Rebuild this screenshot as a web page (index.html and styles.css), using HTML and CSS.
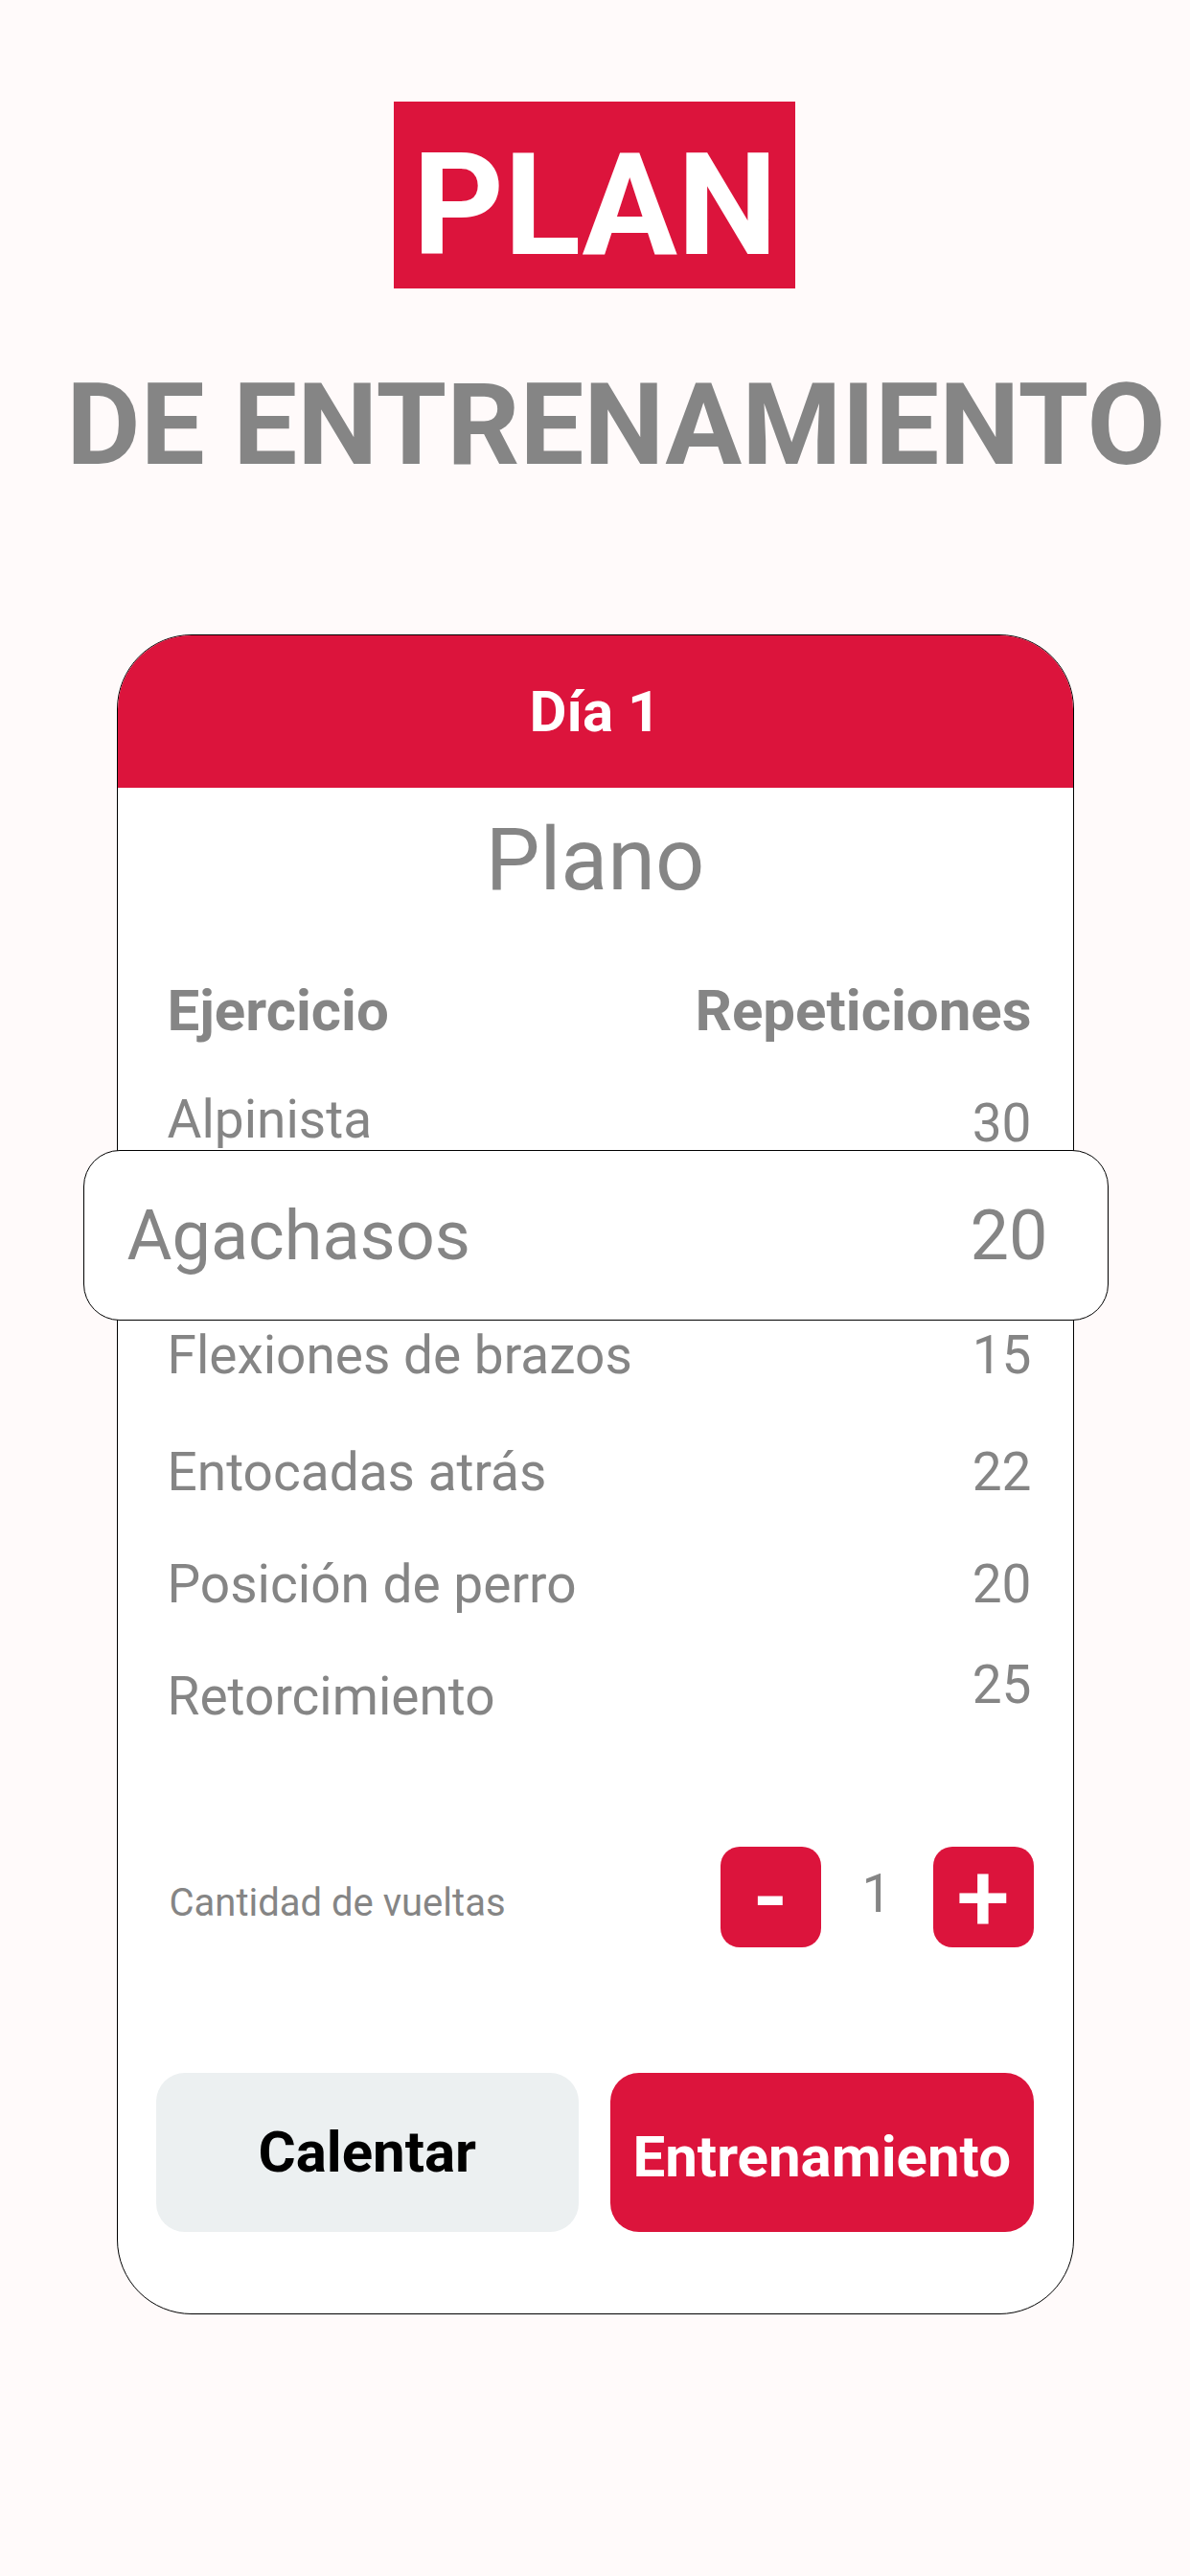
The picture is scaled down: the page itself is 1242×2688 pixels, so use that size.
FILE: index.html
```html
<!DOCTYPE html>
<html lang="es">
<head>
<meta charset="utf-8">
<title>Plan de entrenamiento</title>
<link rel="stylesheet" href="styles.css">
</head>
<body>
<main class="screen">
  <header class="title">
    <h1 class="title-plan">PLAN</h1>
    <h2 class="title-sub">DE ENTRENAMIENTO</h2>
  </header>

  <section class="card">
    <div class="card-head">Día 1</div>
    <h3 class="card-title">Plano</h3>

    <div class="table">
      <div class="row head"><span>Ejercicio</span><span>Repeticiones</span></div>
      <div class="row first"><span>Alpinista</span><span class="num down">30</span></div>
      <div class="row active"><span>Agachasos</span><span class="num">20</span></div>
      <div class="row after-active"><span>Flexiones de brazos</span><span class="num">15</span></div>
      <div class="row wide"><span>Entocadas atrás</span><span class="num">22</span></div>
      <div class="row"><span>Posición de perro</span><span class="num">20</span></div>
      <div class="row"><span>Retorcimiento</span><span class="num up">25</span></div>
    </div>

    <div class="stepper-row">
      <span class="stepper-label">Cantidad de vueltas</span>
      <div class="stepper">
        <button class="step-btn minus" type="button">-</button>
        <span class="step-val">1</span>
        <button class="step-btn plus" type="button">+</button>
      </div>
    </div>

    <div class="actions">
      <button class="btn btn-light" type="button">Calentar</button>
      <button class="btn btn-primary" type="button">Entrenamiento</button>
    </div>
  </section>
</main>
</body>
</html>
```

FILE: styles.css
```css
* { box-sizing: border-box; }

body {
  margin: 0;
  background: #FFFAFA;
  font-family: Roboto, "Noto Sans", "Liberation Sans", sans-serif;
  color: #858585;
}

.screen {
  width: 1242px;
  min-height: 2688px;
  display: flex;
  flex-direction: column;
  align-items: center;
}

.title {
  display: flex;
  flex-direction: column;
  align-items: center;
  padding-top: 106px;
}

.title-plan {
  margin: 0;
  width: 419px;
  height: 195px;
  background: #DC143C;
  color: #fff;
  text-align: center;
  font-size: 148px;
  font-weight: 700;
  line-height: 148px;
  padding-top: 35px;
}

.title-sub {
  margin: 84px 0 0 44px;
  font-size: 119px;
  line-height: 118px;
  font-weight: 700;
  color: #858585;
  white-space: nowrap;
}

.card {
  margin-top: 159px;
  width: 999px;
  background: #fff;
  border: 1px solid #000;
  border-radius: 78px;
  padding-bottom: 85px;
}

.card-head {
  height: 159px;
  background: #DC143C;
  border-radius: 77px 77px 0 0;
  color: #fff;
  font-size: 60px;
  font-weight: 700;
  line-height: 60px;
  display: flex;
  align-items: center;
  justify-content: center;
}

.card-title {
  margin: 31px 0 0;
  font-size: 90px;
  line-height: 90px;
  font-weight: 400;
  text-align: center;
  color: #858585;
}

.table {
  margin-top: 82px;
  padding: 0 43px 0 52px;
  display: flex;
  flex-direction: column;
}

.row {
  display: flex;
  justify-content: space-between;
  align-items: flex-start;
  font-size: 55px;
  line-height: 55px;
  margin-top: 62px;
}

.row.head {
  margin-top: 0;
  font-size: 60px;
  line-height: 60px;
  font-weight: 700;
}

.row.first { margin-top: 56px; }
.row.after-active { margin-top: 9px; }
.row.wide { margin-top: 67px; }

.num.down { margin-top: 4px; }
.num.up { margin-top: -12px; }

.row.active {
  margin: 0 -80px 0 -88px;
  height: 178px;
  align-items: center;
  padding: 2px 62px 0 45px;
  background: #fff;
  border: 1px solid #000;
  border-radius: 38px;
  font-size: 72px;
  line-height: 72px;
}

.stepper-row {
  margin-top: 129px;
  padding: 0 41px 0 54px;
  display: flex;
  justify-content: space-between;
  align-items: flex-start;
}

.stepper-label {
  margin-top: 39px;
  font-size: 40px;
  line-height: 40px;
}

.stepper {
  display: flex;
  align-items: center;
}

.step-val {
  width: 117px;
  text-align: center;
  font-size: 55px;
  line-height: 55px;
  margin-bottom: 6px;
}

.step-btn {
  width: 105px;
  height: 105px;
  padding: 0;
  border: none;
  border-radius: 20px;
  background: #DC143C;
  color: #fff;
  font-family: Roboto, "Noto Sans", sans-serif;
  font-size: 100px;
  font-weight: 500;
  line-height: 100px;
  display: flex;
  align-items: center;
  justify-content: center;
}

.actions {
  margin-top: 131px;
  padding: 0 41px 0 40px;
  display: flex;
  gap: 33px;
}

.btn {
  flex: 1;
  height: 166px;
  border: none;
  border-radius: 30px;
  font-family: Roboto, "Noto Sans", sans-serif;
  font-size: 60px;
  font-weight: 700;
  line-height: 60px;
}

.btn-light {
  background: #ECF0F1;
  color: #000;
}

.btn-primary {
  background: #DC143C;
  color: #fff;
  padding-top: 10px;
}
```
